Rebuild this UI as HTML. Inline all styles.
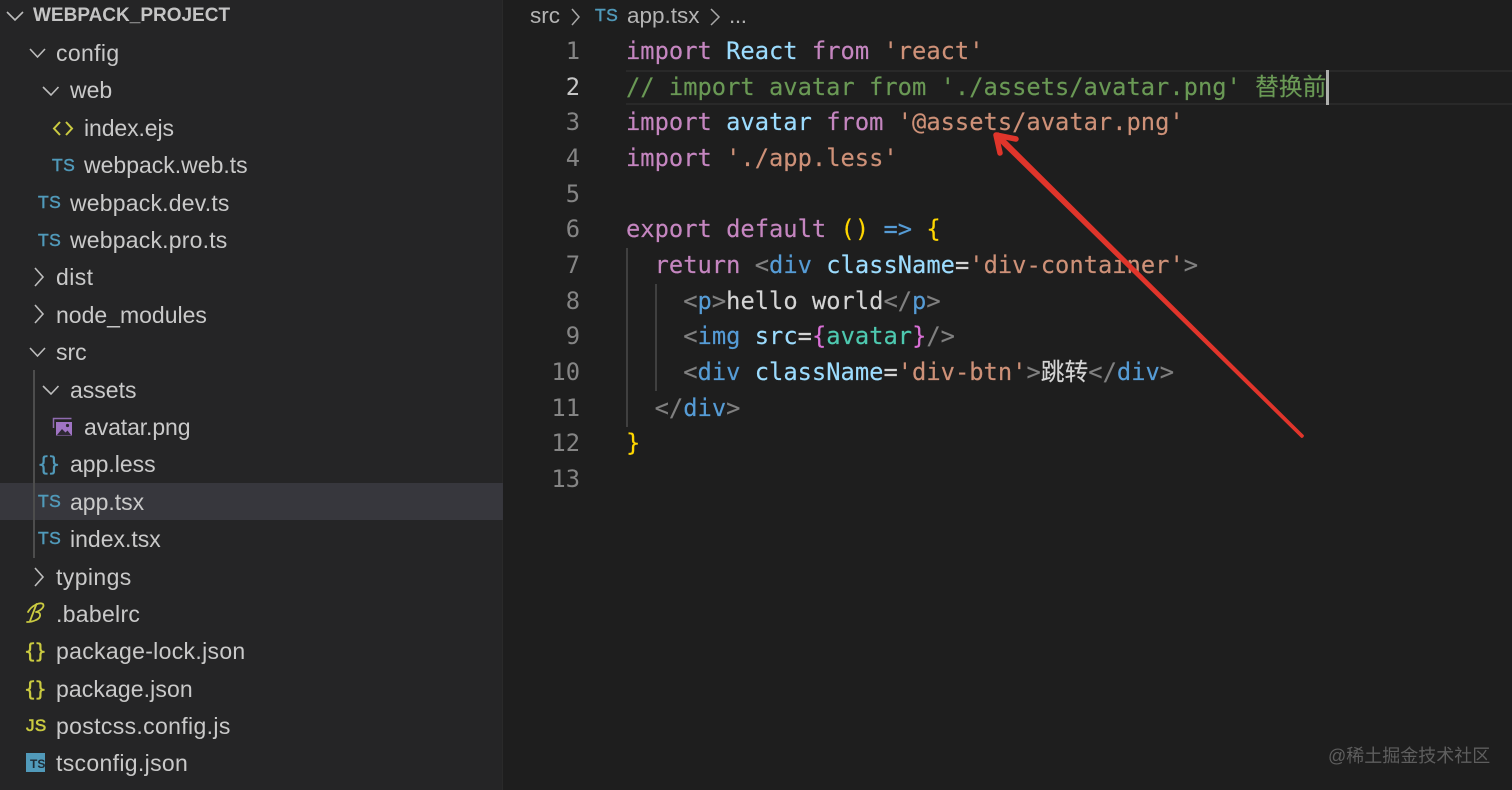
<!DOCTYPE html>
<html lang="en"><head><meta charset="utf-8"><title>app.tsx</title>
<style>
html,body{margin:0;padding:0;width:1512px;height:790px;overflow:hidden;background:#1e1e1e}
#r{position:relative;width:1512px;height:790px;overflow:hidden;background:#1e1e1e;filter:blur(.35px)}
#side{position:absolute;left:0;top:0;width:502px;height:790px;background:#252526;border-right:1px solid #2a2a2a}
.sel{position:absolute;left:0;top:483px;width:503px;height:37px;background:#37373d}
.t{position:absolute;font:23px/30px "Liberation Sans",sans-serif;color:#c9c9c9;white-space:nowrap}
.h{font-weight:bold;font-size:19px;color:#c4c4c4}
.ts{position:absolute;font:17.5px/20px "Liberation Sans",sans-serif;color:#519aba;white-space:nowrap;-webkit-text-stroke:.45px #519aba;letter-spacing:.4px}
.ic{position:absolute;white-space:nowrap;font:20px/24px "DejaVu Sans Mono",monospace;letter-spacing:-1.5px;-webkit-text-stroke:.4px currentColor}
svg{position:absolute;left:0;top:0}
.n{position:absolute;left:520px;width:60px;text-align:right;font:23.75px/36px "DejaVu Sans Mono",monospace;color:#858585}
.c{position:absolute;left:626px;font:23.75px/36px "DejaVu Sans Mono","Noto Sans CJK SC",monospace;color:#d4d4d4;white-space:pre;-webkit-text-stroke:.15px currentColor}
.k{color:#c586c0}.v{color:#9cdcfe}.s{color:#ce9178}.m{color:#6a9955}.g{color:#808080}.b{color:#569cd6}.y{color:#ffd700}.p{color:#da70d6}.e{color:#4ec9b0}
.w{color:#d4d4d4}
</style></head><body><div id="r">
<div id="side"></div><div class="sel"></div>
<div style="position:absolute;left:33px;top:370px;width:1.5px;height:188px;background:#4d4d4d"></div>

<div class="t h" style="left:33px;top:1px">WEBPACK_PROJECT</div>
<div class="t" style="left:56px;top:38px;letter-spacing:.35px">config</div>
<div class="t" style="left:70px;top:75px">web</div>
<div class="t" style="left:84px;top:113px;letter-spacing:-.1px">index.ejs</div>
<div class="t" style="left:84px;top:150px">webpack.web.ts</div>
<div class="t" style="left:70px;top:188px;letter-spacing:.2px">webpack.dev.ts</div>
<div class="t" style="left:70px;top:225px;letter-spacing:.2px">webpack.pro.ts</div>
<div class="t" style="left:56px;top:262px;letter-spacing:.4px">dist</div>
<div class="t" style="left:56px;top:300px">node_modules</div>
<div class="t" style="left:56px;top:337px">src</div>
<div class="t" style="left:70px;top:375px">assets</div>
<div class="t" style="left:84px;top:412px;letter-spacing:-.1px">avatar.png</div>
<div class="t" style="left:70px;top:449px">app.less</div>
<div class="t" style="left:70px;top:487px">app.tsx</div>
<div class="t" style="left:70px;top:524px">index.tsx</div>
<div class="t" style="left:56px;top:562px;letter-spacing:.4px">typings</div>
<div class="t" style="left:56px;top:599px;letter-spacing:.3px">.babelrc</div>
<div class="t" style="left:56px;top:636px;letter-spacing:.32px">package-lock.json</div>
<div class="t" style="left:56px;top:674px;letter-spacing:.1px">package.json</div>
<div class="t" style="left:56px;top:711px;letter-spacing:.35px">postcss.config.js</div>
<div class="t" style="left:56px;top:748px;letter-spacing:.33px">tsconfig.json</div>

<div class="ts" style="left:52px;top:155px">TS</div>
<div class="ts" style="left:38px;top:192px">TS</div>
<div class="ts" style="left:38px;top:230px">TS</div>
<div class="ts" style="left:38px;top:491px">TS</div>
<div class="ts" style="left:38px;top:528px">TS</div>
<div class="ic" style="left:37.500px;top:452px;color:#519aba">{}</div>
<div class="ic" style="left:24px;top:639px;color:#cbcb41">{}</div>
<div class="ic" style="left:24px;top:677px;color:#cbcb41">{}</div>
<div class="ts" style="left:26px;top:716px;color:#cbcb41;-webkit-text-stroke:.6px #cbcb41;font-size:17px">JS</div>
<div style="position:absolute;left:26px;top:753px;width:19px;height:19px;background:#519aba"></div>
<div style="position:absolute;left:30px;top:758px;font:bold 12px/13px 'Liberation Sans',sans-serif;color:#1e2a33">TS</div>

<svg width="1512" height="790" viewBox="0 0 1512 790" fill="none">
<g stroke="#bdbdbd" stroke-width="1.6">
<path d="M7 12l8 8 8-8"/>
<path d="M30 49l7.5 8 7.5-8"/>
<path d="M43 87l8 8 7.5-8"/>
<path d="M30 348l7.5 8 7.5-8"/>
<path d="M43 386l8 8 7.5-8"/>
<path d="M35 268l8 9-8 9"/>
<path d="M35 305l8 9-8 9"/>
<path d="M35 568l8 9-8 9"/>
</g>
<path d="M60 122l-6 6.500 6 6.500M66 122l6 6.500-6 6.500" stroke="#cbcb41" stroke-width="2"/>
<path d="M53.500 428v-9.500h18" stroke="#8f6bb0" stroke-width="1.500"/>
<path d="M56 422h16v13.500h-16z" fill="#a074c4"/>
<path d="M57 435l5-6 3.500 3.500 2-2 3.500 4.500z" fill="#2d2833"/>
<circle cx="67.500" cy="425.500" r="1.600" fill="#2d2833"/>
<path d="M28 612C32 605 40 602 43 604C45 607 40 611 36 612C42 612 41 618 36 620C32 622 29 622 27 622M36.500 604L30 621" stroke="#cbcb41" stroke-width="1.800" stroke-linecap="round" stroke-linejoin="round"/>
<g stroke="#a8a8a8" stroke-width="1.500">
<path d="M572 9l7 8-7 8"/>
<path d="M711 9l8 8-8 8"/>
</g>
</svg>

<div class="t" style="left:530px;top:1px;font-size:22.500px;color:#b4b4b4">src</div>
<div class="ts" style="left:595px;top:5px;font-size:17.500px">TS</div>
<div class="t" style="left:627px;top:1px;font-size:22.500px;color:#b4b4b4">app.tsx</div>
<div class="t" style="left:729px;top:1px;font-size:22.500px;color:#b4b4b4;letter-spacing:-.4px">...</div>

<div style="position:absolute;left:626px;top:70px;width:886px;height:35px;box-sizing:border-box;border-top:2px solid #292929;border-bottom:2px solid #292929"></div>
<div style="position:absolute;left:626px;top:248px;width:1.5px;height:179px;background:#404040"></div>
<div style="position:absolute;left:655px;top:284px;width:1.5px;height:107px;background:#404040"></div>
<div style="position:absolute;left:1325.500px;top:70px;width:3px;height:35px;background:#aeafad"></div>

<div class="n" style="top:33px">1</div>
<div class="n" style="top:69px;color:#c6c6c6">2</div>
<div class="n" style="top:104px">3</div>
<div class="n" style="top:140px">4</div>
<div class="n" style="top:176px">5</div>
<div class="n" style="top:211px">6</div>
<div class="n" style="top:247px">7</div>
<div class="n" style="top:283px">8</div>
<div class="n" style="top:318px">9</div>
<div class="n" style="top:354px">10</div>
<div class="n" style="top:390px">11</div>
<div class="n" style="top:425px">12</div>
<div class="n" style="top:461px">13</div>

<div class="c" style="top:33px"><span class="k">import</span> <span class="v">React</span> <span class="k">from</span> <span class="s">'react'</span></div>
<div class="c" style="top:69px"><span class="m">// import avatar from './assets/avatar.png' 替换前</span></div>
<div class="c" style="top:104px"><span class="k">import</span> <span class="v">avatar</span> <span class="k">from</span> <span class="s">'@assets/avatar.png'</span></div>
<div class="c" style="top:140px"><span class="k">import</span> <span class="s">'./app.less'</span></div>
<div class="c" style="top:211px"><span class="k">export</span> <span class="k">default</span> <span class="y">()</span> <span class="b">=&gt;</span> <span class="y">{</span></div>
<div class="c" style="top:247px">  <span class="k">return</span> <span class="g">&lt;</span><span class="b">div</span> <span class="v">className</span>=<span class="s">'div-container'</span><span class="g">&gt;</span></div>
<div class="c" style="top:283px">    <span class="g">&lt;</span><span class="b">p</span><span class="g">&gt;</span>hello world<span class="g">&lt;/</span><span class="b">p</span><span class="g">&gt;</span></div>
<div class="c" style="top:318px">    <span class="g">&lt;</span><span class="b">img</span> <span class="v">src</span>=<span class="p">{</span><span class="e">avatar</span><span class="p">}</span><span class="g">/&gt;</span></div>
<div class="c" style="top:354px">    <span class="g">&lt;</span><span class="b">div</span> <span class="v">className</span>=<span class="s">'div-btn'</span><span class="g">&gt;</span>跳转<span class="g">&lt;/</span><span class="b">div</span><span class="g">&gt;</span></div>
<div class="c" style="top:390px">  <span class="g">&lt;/</span><span class="b">div</span><span class="g">&gt;</span></div>
<div class="c" style="top:425px"><span class="y">}</span></div>

<svg width="1512" height="790" viewBox="0 0 1512 790" fill="none">
<path d="M998 132L994 137L1301.500 438L1304 435.500z" fill="#e0352b"/>
<path d="M996 135L1302 436" stroke="#e0352b" stroke-width="3.500" stroke-linecap="round"/>
<path d="M1000 153L996 135L1016 139" stroke="#e0352b" stroke-width="5.500" stroke-linecap="round" stroke-linejoin="round"/>
</svg>

<div style="position:absolute;left:1328px;top:745px;font:18px/22px 'Liberation Sans','Noto Sans CJK SC',sans-serif;color:#5e5e5e;white-space:nowrap">@稀土掘金技术社区</div>
</div></body></html>
